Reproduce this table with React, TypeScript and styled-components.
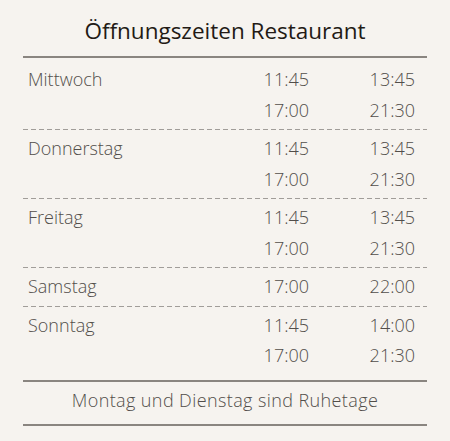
import React from 'react';
import styled, { createGlobalStyle } from 'styled-components';

const GlobalStyle = createGlobalStyle`
  html, body {
    margin: 0;
    padding: 0;
    background: #f6f3ef;
  }
  body {
    font-family: 'Open Sans', Lato, sans-serif;
  }
`;

const Card = styled.div`
  width: 404px;
  margin: 0 auto;
  padding-top: 16px;
`;

const Title = styled.h2`
  margin: 0;
  padding-bottom: 10px;
  font-size: 22.5px;
  font-weight: 400;
  line-height: 30px;
  color: #231a15;
  text-align: center;
`;

const Schedule = styled.div`
  border-top: 2px solid #8a8580;
  border-bottom: 2px solid #8a8580;
  padding: 3px 0 5px;
`;

const DayBlock = styled.div`
  display: grid;
  grid-template-columns: 1fr 90px 106px;
  padding: 3px 12px 4px 5px;
  font-size: 18px;
  font-weight: 300;
  line-height: 30.5px;
  color: #524e4a;
`;

const Divider = styled.div`
  height: 1px;
  background: repeating-linear-gradient(
    to right,
    #a19d99 0 5px,
    transparent 5px 8px
  );
`;

const DayName = styled.span`
  grid-column: 1;
`;

const Time = styled.span<{ $col: number }>`
  grid-column: ${(p) => p.$col};
  text-align: right;
`;

const Footer = styled.div`
  padding: 5px 0 11px;
  font-size: 18px;
  font-weight: 300;
  letter-spacing: 0.4px;
  line-height: 26px;
  color: #524e4a;
  text-align: center;
  border-bottom: 2px solid #8a8580;
`;

const days: { name: string; slots: [string, string][] }[] = [
  { name: 'Mittwoch', slots: [['11:45', '13:45'], ['17:00', '21:30']] },
  { name: 'Donnerstag', slots: [['11:45', '13:45'], ['17:00', '21:30']] },
  { name: 'Freitag', slots: [['11:45', '13:45'], ['17:00', '21:30']] },
  { name: 'Samstag', slots: [['17:00', '22:00']] },
  { name: 'Sonntag', slots: [['11:45', '14:00'], ['17:00', '21:30']] },
];

export default function App() {
  return (
    <>
      <GlobalStyle />
      <Card>
        <Title>Öffnungszeiten Restaurant</Title>
        <Schedule>
          {days.map((day, i) => (
            <React.Fragment key={day.name}>
              {i > 0 && <Divider />}
              <DayBlock>
                <DayName>{day.name}</DayName>
                {day.slots.map(([from, to], j) => (
                  <React.Fragment key={j}>
                    <Time $col={2} style={{ gridRow: j + 1 }}>
                      {from}
                    </Time>
                    <Time $col={3} style={{ gridRow: j + 1 }}>
                      {to}
                    </Time>
                  </React.Fragment>
                ))}
              </DayBlock>
            </React.Fragment>
          ))}
        </Schedule>
        <Footer>Montag und Dienstag sind Ruhetage</Footer>
      </Card>
    </>
  );
}
